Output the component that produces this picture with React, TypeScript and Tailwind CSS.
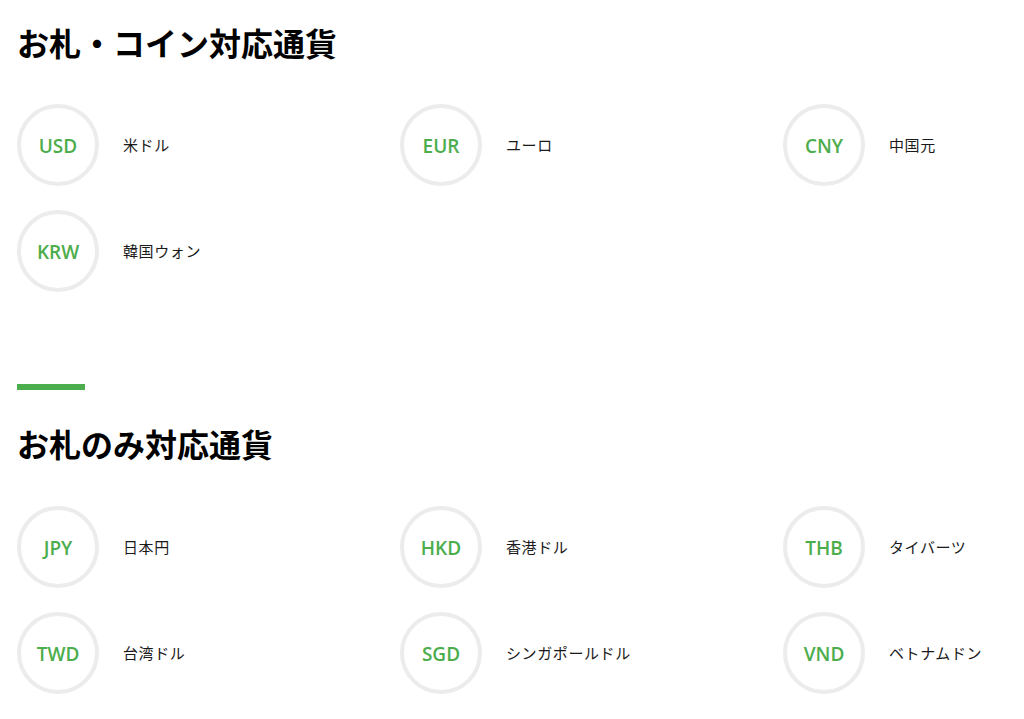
const COIN_AND_NOTE = [
  { code: "USD", name: "米ドル" },
  { code: "EUR", name: "ユーロ" },
  { code: "CNY", name: "中国元" },
  { code: "KRW", name: "韓国ウォン" },
];

const NOTE_ONLY = [
  { code: "JPY", name: "日本円" },
  { code: "HKD", name: "香港ドル" },
  { code: "THB", name: "タイバーツ" },
  { code: "TWD", name: "台湾ドル" },
  { code: "SGD", name: "シンガポールドル" },
  { code: "VND", name: "ベトナムドン" },
];

function Currency({ code, name }: { code: string; name: string }) {
  return (
    <li className="flex items-center gap-6">
      <div className="w-[82px] h-[82px] shrink-0 rounded-full border-4 border-[#ececec] flex items-center justify-center pt-[2px]">
        <span className="font-['Open_Sans',sans-serif] font-semibold text-[19px] text-[#4cad4c] leading-none">
          {code}
        </span>
      </div>
      <span className="text-[15px] text-[#1a1a1a] tracking-[0.04em]">{name}</span>
    </li>
  );
}

function CurrencyGrid({ items }: { items: { code: string; name: string }[] }) {
  return (
    <ul className="grid grid-cols-[383px_383px_1fr] gap-y-6">
      {items.map((c) => (
        <Currency key={c.code} code={c.code} name={c.name} />
      ))}
    </ul>
  );
}

export default function App() {
  return (
    <div className="min-h-screen bg-white pl-[17px] font-['Noto_Sans_CJK_JP','Noto_Sans',sans-serif] text-black overflow-hidden">
      {/* お札・コイン */}
      <section className="pt-5">
        <h2 className="text-[32px] font-bold leading-[44px] h-[44px]">お札・コイン対応通貨</h2>
        <div className="mt-10">
          <CurrencyGrid items={COIN_AND_NOTE} />
        </div>
      </section>

      {/* お札のみ */}
      <section className="pt-[92px]">
        <div className="w-[68px] h-[6px] bg-[#4cad4c]" />
        <h2 className="mt-[31px] text-[32px] font-bold leading-[44px] h-[44px]">お札のみ対応通貨</h2>
        <div className="mt-[41px]">
          <CurrencyGrid items={NOTE_ONLY} />
        </div>
      </section>
    </div>
  );
}
